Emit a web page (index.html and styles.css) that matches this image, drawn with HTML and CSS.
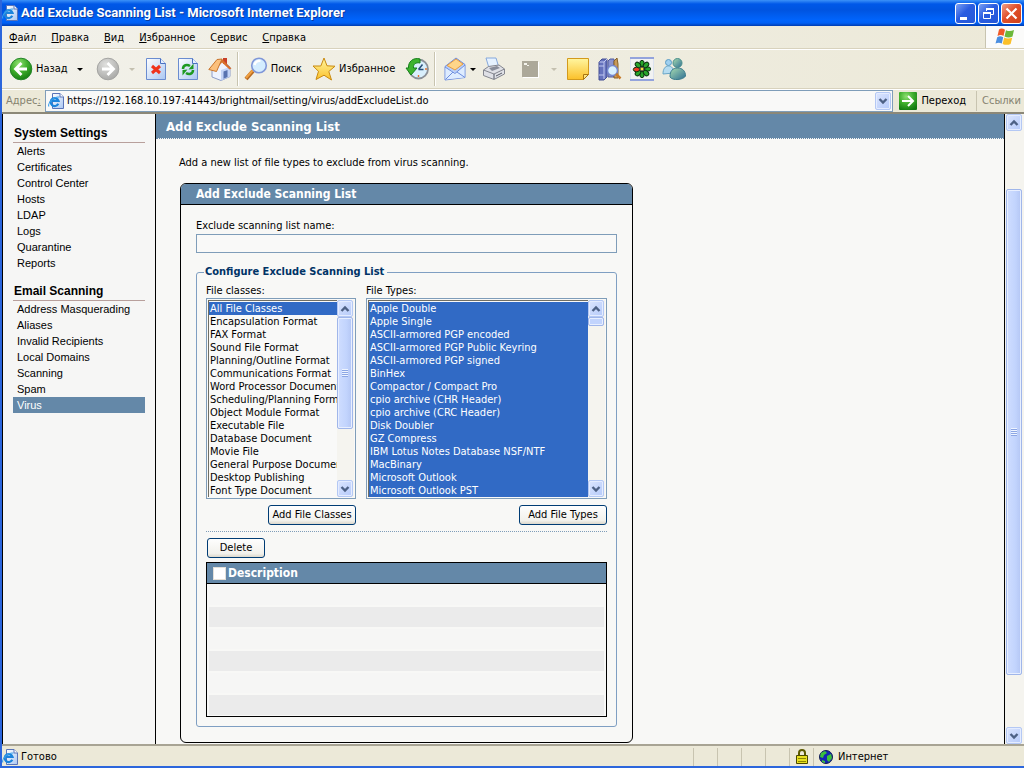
FILE: index.html
```html
<!DOCTYPE html>
<html lang="ru">
<head>
    <meta charset="UTF-8">
    <meta name="viewport" content="width=device-width, initial-scale=1.0">
    <title>Add Exclude Scanning List - Microsoft Internet Explorer</title>
    <link rel="stylesheet" href="styles.css">
</head>
<body>
    <!-- shared icons -->
    <svg class="defs" width="0" height="0" aria-hidden="true">
        <defs>
            <linearGradient id="gPage" x1="0" y1="0" x2="1" y2="1">
                <stop offset="0" stop-color="#fff"/><stop offset="1" stop-color="#a9c6f2"/>
            </linearGradient>
            <radialGradient id="gGreen" cx=".4" cy=".25" r=".8">
                <stop offset="0" stop-color="#8fe070"/><stop offset=".5" stop-color="#3fae2c"/><stop offset="1" stop-color="#127a10"/>
            </radialGradient>
            <radialGradient id="gGray" cx=".4" cy=".3" r=".8">
                <stop offset="0" stop-color="#e0e0de"/><stop offset="1" stop-color="#a3a3a1"/>
            </radialGradient>
            <linearGradient id="gGold" x1="0" y1="0" x2="0" y2="1">
                <stop offset="0" stop-color="#fff6a0"/><stop offset="1" stop-color="#fbc02a"/>
            </linearGradient>
            <linearGradient id="gPeople" x1="0" y1="0" x2="1" y2="1">
                <stop offset="0" stop-color="#a8dcb0"/><stop offset="1" stop-color="#2f6f94"/>
            </linearGradient>
            <symbol id="ie" viewBox="0 0 16 16">
                <path d="M4.500.500h7.500l3.500 3.500v11.500h-11z" fill="url(#gPage)" stroke="#5a74b8"/>
                <path d="M12 .5v3.500h3.500" fill="#fff" stroke="#5a74b8"/>
                <path d="M10.300 10.800a4 4 0 1 1 .2-3H4" fill="none" stroke="#1c84dc" stroke-width="2.200"/>
                <path d="M1 13.500C-1 10 6 3 11.500 4.200" fill="none" stroke="#3ba0ea" stroke-width="1.100"/>
            </symbol>
            <symbol id="up" viewBox="0 0 10 10"><path d="M1.500 7L5 3.500 8.500 7" fill="none" stroke="#4d6185" stroke-width="2.400"/></symbol>
            <symbol id="down" viewBox="0 0 10 10"><path d="M1.500 3L5 6.500 8.500 3" fill="none" stroke="#4d6185" stroke-width="2.400"/></symbol>
        </defs>
    </svg>

    <div class="window">
        <header class="titlebar">
            <svg class="icon16"><use href="#ie"/></svg>
            <h1>Add Exclude Scanning List - Microsoft Internet Explorer</h1>
            <button class="win-btn" aria-label="Свернуть"><svg viewBox="0 0 19 19"><path d="M4 13h7v3H4z" fill="#fff"/></svg></button>
            <button class="win-btn" aria-label="Восстановить"><svg viewBox="0 0 19 19" fill="none" stroke="#fff"><path d="M7.500 7V4.500h7v6H12"/><path d="M7 5h8" stroke-width="2"/><path d="M4.500 8.500h7v6h-7z"/><path d="M4 9h8" stroke-width="2"/></svg></button>
            <button class="win-btn close" aria-label="Закрыть"><svg viewBox="0 0 19 19"><path d="M4.500 4.500l10 10M14.500 4.500l-10 10" stroke="#fff" stroke-width="2.200"/></svg></button>
        </header>

        <div class="menubar">
            <nav class="menu">
                <a href="#"><u>Ф</u>айл</a>
                <a href="#"><u>П</u>равка</a>
                <a href="#"><u>В</u>ид</a>
                <a href="#"><u>И</u>збранное</a>
                <a href="#">С<u>е</u>рвис</a>
                <a href="#"><u>С</u>правка</a>
            </nav>
            <div class="flag">
                <svg width="20" height="18" viewBox="0 0 20 18">
                    <path d="M4 1.500c2-1.500 4-1 6 .3L8.500 8C6.500 6.800 5 6.800 2.500 8z" fill="#f05a28"/>
                    <path d="M11 2.200c2.500 1.200 5 1.200 8-.2L17.500 8.500c-2.500 1.200-5.500 1.200-8-.1z" fill="#6cb83a"/>
                    <path d="M2.200 9.200c2.200-1.200 4-1 6 0L6.800 15.600c-2-1-4-1.100-6.300 0z" fill="#4a8ee0"/>
                    <path d="M9.200 9.600c2.500 1.200 5 1.200 8 .1l-1.600 6.200c-2.500 1.300-5.500 1.200-8 0z" fill="#fbc02a"/>
                </svg>
            </div>
        </div>

        <div class="toolbar">
            <button class="tool">
                <svg viewBox="0 0 24 24"><circle cx="12" cy="12" r="10.800" fill="url(#gGreen)" stroke="#25862a"/><path d="M12.500 6L6.500 12l6 6M7 12h11" fill="none" stroke="#fff" stroke-width="2.800"/></svg>
                <span>Назад</span>
            </button>
            <button class="caret back-caret" aria-label="Список"></button>
            <button class="tool" aria-label="Вперед"><svg viewBox="0 0 24 24"><circle cx="12" cy="12" r="10.800" fill="url(#gGray)" stroke="#a4a4a2"/><path d="M11.500 6l6 6-6 6M17 12H6" fill="none" stroke="#fff" stroke-width="2.800"/></svg></button>
            <button class="caret off" aria-label="Список" disabled></button>
            <button class="tool" aria-label="Остановить"><svg viewBox="0 0 24 24"><path d="M2.500 1.500h14l5 5v16h-19z" fill="url(#gPage)" stroke="#6a8cd0"/><path d="M16.500 1.500v5h5" fill="#e4eeff" stroke="#4a70c0"/><path d="M8 9l8 7M16 9l-8 7" stroke="#f0331c" stroke-width="3"/></svg></button>
            <button class="tool" aria-label="Обновить"><svg viewBox="0 0 24 24"><path d="M2.500 1.500h14l5 5v16h-19z" fill="url(#gPage)" stroke="#6a8cd0"/><path d="M16.500 1.500v5h5" fill="#e4eeff" stroke="#4a70c0"/><path d="M7 12c0-4 4-5 7-3" fill="none" stroke="#1e9a22" stroke-width="2.500"/><path d="M12.500 12.500l5-.5V6.500z" fill="#1e9a22"/><path d="M17 13c0 4-4 5-7 3" fill="none" stroke="#1e9a22" stroke-width="2.500"/><path d="M11.500 12.500l-5 .5v5.500z" fill="#1e9a22"/></svg></button>
            <button class="tool" aria-label="Домой"><svg viewBox="0 0 24 24"><path d="M4 12v8l9 3.500 9-4V10L14 3z" fill="#eef3ff" stroke="#8c9cc8"/><path d="M13 13l9-3v9.500l-9 4z" fill="#c3d3f6"/><path d="M15.500 14.500l4-1.500v7l-4 1.800z" fill="#5872b0"/><path d="M15 1h4v6h-4z" fill="#c84028"/><path d="M14 2l9.500 9.500-2 1L14 5.500 11 9z" fill="#d9702c"/><path d="M.8 12.500L9 2.500 14 2l-5.500 12.500z" fill="#fbc07c" stroke="#c8742c" stroke-linejoin="round"/></svg></button>
            <i class="sep"></i>
            <button class="tool">
                <svg viewBox="0 0 24 24"><path d="M2 22l7-8" stroke="#b86a22" stroke-width="4"/><path d="M2 21l7-8" stroke="#f0a040" stroke-width="2"/><circle cx="15" cy="8.500" r="7.300" fill="#d4edff" stroke="#8097d8" stroke-width="1.600"/><path d="M10.500 8c.5-3 3-4.500 6-4" fill="none" stroke="#fff" stroke-width="2.400"/></svg>
                <span>Поиск</span>
            </button>
            <button class="tool favorites">
                <svg viewBox="0 0 24 24"><path d="M12 1l3 7.800 8 .4-6.200 5.300L19.500 23 12 18.200 4 22.500l2.500-8.200L1 9h7.800z" fill="url(#gGold)" stroke="#c98a10" stroke-linejoin="round"/></svg>
                <span>Избранное</span>
            </button>
            <button class="tool" aria-label="Журнал"><svg viewBox="0 0 24 24"><circle cx="13.500" cy="12" r="9.500" fill="#d9effc" stroke="#8b9097" stroke-width="1.800"/><path d="M13.500 12.500l4-5M13.500 12.500h5" stroke="#2a5078" stroke-width="1.500"/><path d="M13.500 4v2M13.500 18v2M20 12h2" stroke="#e07030" stroke-width="1.400"/><path d="M15 2C8 0 3 5 3.500 11H1L6 18l6-7H8.500C8 7.500 10.500 5 15 6z" fill="#3db32d" stroke="#16801c"/></svg></button>
            <i class="sep"></i>
            <button class="tool mail" aria-label="Почта"><svg viewBox="0 0 24 24"><path d="M2 9.500L13 1l9 6.500v13L2 23z" fill="#b8cffa" stroke="#6e8ede"/><path d="M4 8.500L13 2l7 5-8 6z" fill="#ffd68a" stroke="#e89c40"/><path d="M2.500 10l10 6 9-8v12.500L2.500 22.500z" fill="#deecff"/><path d="M2 10l10 6.500L22 8M2.500 22.500L10 15M22 20.500L14 15" fill="none" stroke="#6e8ede"/></svg></button>
            <button class="caret mail-caret" aria-label="Список"></button>
            <button class="tool" aria-label="Печать"><svg viewBox="0 0 24 24"><path d="M4 1h10l3 10H7z" fill="#e6f2ff" stroke="#85a8dc"/><path d="M1.500 13l5-3.500L17 8l5.500 4v5L12 22.500 1.500 18.500z" fill="#dfe0e6" stroke="#84868f"/><path d="M1.500 13L12 17l10.500-5" fill="none" stroke="#84868f"/><path d="M7 11l8-2 3 2-8 3z" fill="#888d9a"/><path d="M12 17v5M14 19l6-3" stroke="#565a66"/></svg></button>
            <button class="tool edit" aria-label="Правка" disabled><svg viewBox="0 0 24 24"><path d="M5 5h16v16H5z" fill="#fff"/><path d="M4 4h16v16H4z" fill="#aca899"/><path d="M6 6h3v2H6zM9 8h2v1H9z" fill="#f4f3ec"/></svg></button>
            <button class="caret off" aria-label="Список" disabled></button>
            <button class="tool" aria-label="Заметка"><svg viewBox="0 0 24 24"><path d="M1.500 1.500h21v16l-5 5h-16z" fill="url(#gGold)" stroke="#d39a1c"/><path d="M22.500 17.500l-5 5v-5z" fill="#ffe680" stroke="#a87510"/></svg></button>
            <button class="tool" aria-label="Справочные материалы"><svg viewBox="0 0 24 24"><path d="M1 5l3-3h5v18l-3 3H1z" fill="#6572bd" stroke="#444f94"/><path d="M6 5v17M1.500 5H6l3-3M1 9h5M1 18h5" stroke="#c1c8f0" fill="none"/><path d="M10 4l2-2h4v18h-6z" fill="#8b93ce" stroke="#515ca0"/><path d="M16 4l3-3 1 6v14h-4z" fill="#c89a58" stroke="#866028"/><circle cx="14.500" cy="13.500" r="5" fill="#d8f0ff" stroke="#7487cf" stroke-width="1.500"/><path d="M18 17l4.500 4.500" stroke="#c67b2a" stroke-width="2.500"/></svg></button>
            <button class="tool" aria-label="ICQ"><svg viewBox="0 0 24 24"><path d="M0 0h24v24H0z" fill="#dce2ee"/><path d="M0 0h24v2H0zM0 22h24v2H0z" fill="#93a3dc"/><path d="M1 2h22v20H1z" fill="#f1f2f2"/><g fill="#28a62c" stroke="#0c3410" stroke-width="1"><ellipse cx="12" cy="6.500" rx="2.200" ry="3.200"/><ellipse cx="12" cy="17.500" rx="2.200" ry="3.200"/><ellipse cx="17.500" cy="12" rx="3.200" ry="2.200"/><ellipse cx="16" cy="8" rx="3.200" ry="2.200" transform="rotate(-45 16 8)"/><ellipse cx="8" cy="8" rx="3.200" ry="2.200" transform="rotate(45 8 8)"/><ellipse cx="16" cy="16" rx="3.200" ry="2.200" transform="rotate(45 16 16)"/><ellipse cx="8" cy="16" rx="3.200" ry="2.200" transform="rotate(-45 8 16)"/><ellipse cx="6.500" cy="12.500" rx="3.200" ry="2.200" fill="#f03a24"/></g><circle cx="12" cy="12" r="2" fill="#f4e03c" stroke="#333"/></svg></button>
            <button class="tool" aria-label="Messenger"><svg viewBox="0 0 24 24"><circle cx="6.500" cy="5.500" r="3" fill="#9fd0f0" stroke="#5b9cc4"/><path d="M1 17c0-5 2-8 5.500-8 3 0 5 2 5 7z" fill="#b6dcf0" stroke="#6aa7c8"/><circle cx="15.500" cy="6" r="4.500" fill="url(#gPeople)" stroke="#4a8f8c"/><path d="M8 20c0-6 2.500-9 7.500-9s8 3 8 8c-2 4-13 5-15.500 1z" fill="url(#gPeople)" stroke="#3c7c8c"/></svg></button>
        </div>

        <div class="address-bar">
            <label for="url">Адрес<u>:</u></label>
            <div class="address-box">
                <svg class="icon16"><use href="#ie"/></svg>
                <input id="url" type="text" value="https://192.168.10.197:41443/brightmail/setting/virus/addExcludeList.do">
                <button class="scroll-btn" aria-label="Открыть список"><svg><use href="#down"/></svg></button>
            </div>
            <button class="go">
                <svg width="18" height="18" viewBox="0 0 18 18"><rect width="18" height="18" rx="1" fill="url(#gGreen)"/><path d="M9 4l5 5-5 5M13 9H3" fill="none" stroke="#fff" stroke-width="2"/></svg>
                Переход
            </button>
            <a class="links" href="#">Ссылки</a>
        </div>

        <div class="viewport">
            <aside class="sidebar">
                <h2>System Settings</h2>
                <ul>
                    <li><a href="#">Alerts</a></li>
                    <li><a href="#">Certificates</a></li>
                    <li><a href="#">Control Center</a></li>
                    <li><a href="#">Hosts</a></li>
                    <li><a href="#">LDAP</a></li>
                    <li><a href="#">Logs</a></li>
                    <li><a href="#">Quarantine</a></li>
                    <li><a href="#">Reports</a></li>
                </ul>
                <h2>Email Scanning</h2>
                <ul>
                    <li><a href="#">Address Masquerading</a></li>
                    <li><a href="#">Aliases</a></li>
                    <li><a href="#">Invalid Recipients</a></li>
                    <li><a href="#">Local Domains</a></li>
                    <li><a href="#">Scanning</a></li>
                    <li><a href="#">Spam</a></li>
                    <li><a class="active" href="#">Virus</a></li>
                </ul>
            </aside>

            <main class="content">
                <h2 class="page-title">Add Exclude Scanning List</h2>
                <p class="intro">Add a new list of file types to exclude from virus scanning.</p>

                <form class="panel">
                    <h3 class="panel-title">Add Exclude Scanning List</h3>
                    <div class="panel-body">
                        <label for="listName">Exclude scanning list name:</label>
                        <input id="listName" class="name-input" type="text">

                        <fieldset>
                            <legend>Configure Exclude Scanning List</legend>
                            <div class="lists">
                                <div class="list-col classes">
                                    <label for="classes">File classes:</label>
                                    <div class="listbox">
                                        <select id="classes" multiple size="15">
                                            <option selected>All File Classes</option>
                                            <option>Encapsulation Format</option>
                                            <option>FAX Format</option>
                                            <option>Sound File Format</option>
                                            <option>Planning/Outline Format</option>
                                            <option>Communications Format</option>
                                            <option>Word Processor Document</option>
                                            <option>Scheduling/Planning Format</option>
                                            <option>Object Module Format</option>
                                            <option>Executable File</option>
                                            <option>Database Document</option>
                                            <option>Movie File</option>
                                            <option>General Purpose Document</option>
                                            <option>Desktop Publishing</option>
                                            <option>Font Type Document</option>
                                        </select>
                                        <div class="scrollbar">
                                            <span class="scroll-btn"><svg><use href="#up"/></svg></span>
                                            <span class="thumb long"></span>
                                            <span class="scroll-btn"><svg><use href="#down"/></svg></span>
                                        </div>
                                    </div>
                                    <button type="button" class="btn">Add File Classes</button>
                                </div>
                                <div class="list-col types">
                                    <label for="types">File Types:</label>
                                    <div class="listbox">
                                        <select id="types" multiple size="15">
                                            <option selected>Apple Double</option>
                                            <option selected>Apple Single</option>
                                            <option selected>ASCII-armored PGP encoded</option>
                                            <option selected>ASCII-armored PGP Public Keyring</option>
                                            <option selected>ASCII-armored PGP signed</option>
                                            <option selected>BinHex</option>
                                            <option selected>Compactor / Compact Pro</option>
                                            <option selected>cpio archive (CHR Header)</option>
                                            <option selected>cpio archive (CRC Header)</option>
                                            <option selected>Disk Doubler</option>
                                            <option selected>GZ Compress</option>
                                            <option selected>IBM Lotus Notes Database NSF/NTF</option>
                                            <option selected>MacBinary</option>
                                            <option selected>Microsoft Outlook</option>
                                            <option selected>Microsoft Outlook PST</option>
                                        </select>
                                        <div class="scrollbar">
                                            <span class="scroll-btn"><svg><use href="#up"/></svg></span>
                                            <span class="thumb short"></span>
                                            <span class="scroll-btn"><svg><use href="#down"/></svg></span>
                                        </div>
                                    </div>
                                    <button type="button" class="btn">Add File Types</button>
                                </div>
                            </div>

                            <div class="delete-row">
                                <button type="button" class="btn delete">Delete</button>
                            </div>

                            <table>
                                <thead>
                                    <tr><th><label><input type="checkbox">Description</label></th></tr>
                                </thead>
                                <tbody>
                                    <tr><td></td></tr>
                                    <tr><td></td></tr>
                                    <tr><td></td></tr>
                                    <tr><td></td></tr>
                                    <tr><td></td></tr>
                                    <tr><td></td></tr>
                                </tbody>
                            </table>
                        </fieldset>
                    </div>
                </form>
            </main>

            <div class="scrollbar page-scroll">
                <span class="scroll-btn"><svg><use href="#up"/></svg></span>
                <span class="space-above"></span>
                <span class="thumb"></span>
                <span class="space-below"></span>
                <span class="scroll-btn"><svg><use href="#down"/></svg></span>
            </div>
        </div>

        <footer class="statusbar">
            <svg class="icon16"><use href="#ie"/></svg>
            <span class="status-text">Готово</span>
            <span class="pane"></span>
            <span class="pane"></span>
            <span class="pane"></span>
            <span class="pane"></span>
            <span class="pane">
                <svg width="14" height="16" viewBox="0 0 14 16"><path d="M4 7V4a3 3 0 0 1 6 0v3" fill="none" stroke="#5c5a00" stroke-width="2"/><path d="M1.500 6.500h11v8h-11z" fill="#e8e020" stroke="#4a4800"/><path d="M3 9.500h8M3 12.500h8" stroke="#8c8800"/></svg>
            </span>
            <span class="pane zone">
                <svg width="14" height="14" viewBox="0 0 14 14"><circle cx="7" cy="7" r="6.500" fill="#1424b4" stroke="#101c50"/><path d="M2 3l4-2 2 2-3 2-1 3-3-1zM8 6l4-2 1 4-3 4-2-2zM3 10l3 1v2l-3-1z" fill="#3cc03c"/></svg>
                Интернет
            </span>
        </footer>
    </div>
</body>
</html>
```

FILE: styles.css
```css
* {
    margin: 0;
    padding: 0;
    box-sizing: border-box;
}

body {
    font-family: 'DejaVu Sans Condensed', 'Noto Sans', sans-serif;
    font-size: 11px;
    line-height: 16px;
    color: #000;
}

button, input, select {
    font: inherit;
    color: inherit;
}

button {
    border: none;
    background: none;
}

a {
    color: inherit;
    text-decoration: none;
}

.defs {
    position: absolute;
}

.icon16 {
    width: 16px;
    height: 16px;
    flex: none;
}

/* window frame */
.window {
    display: flex;
    flex-direction: column;
    min-height: 100vh;
    border: solid #2c66dc;
    border-width: 0 0 2px 2px;
    background: #ece9d8;
}

.titlebar {
    display: flex;
    align-items: center;
    gap: 2px;
    height: 26px;
    padding-right: 2px;
    background: linear-gradient(#3c92f8 0, #0058e8 4px, #0054e0 10px, #0064fc 20px, #0060f4 23px, #003cb0 26px);
}

.titlebar h1 {
    flex: 1;
    padding-left: 1px;
    font-family: Roboto, 'Noto Sans', sans-serif;
    font-size: 13px;
    font-weight: 700;
    color: #fff;
    text-shadow: 1px 1px #0a3a9c;
}

.win-btn {
    width: 21px;
    height: 21px;
    border: 1px solid #fff;
    border-radius: 3px;
    background: linear-gradient(135deg, #7ba0f4, #2a5ce0 45%, #2458d8);
}

.win-btn svg {
    display: block;
    width: 19px;
    height: 19px;
}

.win-btn.close {
    background: linear-gradient(135deg, #f0a088, #e0502c 45%, #d04018);
}

.menubar {
    display: flex;
    height: 23px;
    border-bottom: 1px solid #d8d2bd;
    background: linear-gradient(90deg, #f2f1ea, #ece9d8);
}

.menu {
    display: flex;
    flex: 1;
    align-items: center;
    gap: 15px;
    padding: 2px 0 0 7px;
}

.flag {
    display: flex;
    align-items: center;
    justify-content: center;
    width: 39px;
    border-left: 1px solid #c8c4b0;
    background: #fbfbfa;
}

/* toolbar */
.toolbar {
    display: flex;
    align-items: center;
    height: 40px;
    padding-left: 3px;
    border-top: 1px solid #fff;
    border-bottom: 1px solid #d8d2bd;
    background: linear-gradient(90deg, #f2f1ea, #ece9d8);
}

.tool {
    display: flex;
    align-items: center;
    gap: 3px;
    height: 32px;
    padding: 0 4px;
}

.tool svg {
    width: 24px;
    height: 24px;
    flex: none;
}

.tool.edit {
    margin-left: 4px;
}

.tool.favorites {
    margin: 0 2px;
}

.tool.mail {
    margin-left: 2px;
    padding-right: 0;
}

.caret {
    display: flex;
    align-items: center;
    justify-content: center;
    width: 16px;
    height: 32px;
}

.caret::before {
    content: '';
    border: 3px solid transparent;
    border-top-color: #000;
    border-bottom: none;
}

.caret.off::before {
    border-top-color: #c4c0b0;
}

.back-caret {
    margin-right: 4px;
}

.mail-caret {
    width: 11px;
}

.sep {
    width: 2px;
    height: 34px;
    margin: 0 1px;
    border-left: 1px solid #c8c4b0;
    border-right: 1px solid #fff;
}

/* address bar */
.address-bar {
    display: flex;
    align-items: center;
    height: 25px;
    padding-left: 4px;
    border-top: 1px solid #fff;
    border-bottom: 2px solid #8c8878;
}

.address-bar label {
    width: 39px;
    color: #85826f;
}

.address-box {
    display: flex;
    flex: 1;
    align-items: center;
    gap: 3px;
    height: 22px;
    padding: 1px 1px 1px 2px;
    border: 1px solid #7f9db9;
    background: #f9f9f8;
}

.address-box input {
    flex: 1;
    min-width: 0;
    border: none;
    outline: none;
    background: none;
}

.address-box .scroll-btn {
    height: 18px;
}

.go {
    display: flex;
    align-items: center;
    gap: 4px;
    padding: 0 10px 0 6px;
}

.links {
    padding: 2px 3px 2px 5px;
    border-left: 1px solid #c8c4b0;
    color: #85826f;
}

/* scrollbars */
.scrollbar {
    display: flex;
    flex: none;
    flex-direction: column;
    width: 17px;
    background: #f5f4ef;
}

.scroll-btn {
    display: flex;
    flex: none;
    align-items: center;
    justify-content: center;
    width: 16px;
    height: 17px;
    border: 1px solid #b4c8f4;
    border-radius: 2px;
    background: linear-gradient(135deg, #dbe5fe, #b5cafa);
    box-shadow: inset 0 0 0 1px #e4ecff;
}

.scroll-btn svg {
    width: 10px;
    height: 10px;
}

.thumb {
    width: 16px;
    border: 1px solid #a0b6ea;
    border-radius: 2px;
    /* grip lines over the blue fill */
    background:
        repeating-linear-gradient(#eef4ff 0 1px, #8ca6e4 1px 2px) center / 6px 8px no-repeat,
        linear-gradient(90deg, #cfddff, #c2d4fd 60%, #b4c6f4);
    box-shadow: inset 0 0 0 1px #e8efff;
}

.scrollbar .scroll-btn:last-child {
    margin-top: auto;
}

/* page */
.viewport {
    display: flex;
    flex: 1;
    background: #f8f8f6;
}

.sidebar {
    flex: none;
    width: 154px;
    padding: 11px 10px 0;
    border: 1px solid #000;
    border-width: 0 1px;
    background: #f6f6f5;
    font-family: 'Liberation Sans', Arial, sans-serif;
}

.sidebar h2 {
    padding: 0 1px;
    border-bottom: 1px solid #b8a09c;
    font-size: 12px;
    line-height: 17px;
}

.sidebar ul {
    margin-bottom: 12px;
    list-style: none;
}

.sidebar a {
    display: block;
    padding: 0 4px;
    line-height: 16px;
}

.sidebar .active {
    background: #6488a8;
    color: #fff;
}

.content {
    flex: 1;
    min-width: 0;
    border-right: 1px solid #000;
}

.page-title {
    height: 25px;
    padding-left: 10px;
    border-bottom: 1px dotted #6488a8;
    background: #6488a8;
    background-clip: padding-box;
    color: #fff;
    font-size: 13px;
    line-height: 26px;
}

.intro {
    padding: 16px 23px 12px;
}

.page-scroll {
    padding-left: 1px;
    width: 19px;
}

.page-scroll .space-above {
    flex: 58;
}

.page-scroll .thumb {
    flex: 485;
}

.page-scroll .space-below {
    flex: 52;
}

/* form panel */
.panel {
    width: 453px;
    margin-left: 24px;
    border: 1px solid #000;
    border-radius: 6px;
    overflow: hidden;
}

.panel-title {
    padding-left: 15px;
    border-bottom: 1px solid #000;
    background: #6488a8;
    color: #fff;
    font-size: 12px;
    line-height: 20px;
}

.panel-body {
    padding: 13px 15px 15px;
}

label {
    display: block;
}

.name-input {
    display: block;
    width: 100%;
    height: 19px;
    padding: 0 3px;
    border: 1px solid #7f9db9;
    background: #f9f9f8;
}

fieldset {
    margin-top: 11px;
    padding: 0 9px 9px;
    border: 1px solid #7f9fc2;
    border-radius: 3px;
}

legend {
    padding: 0 3px 0 1px;
    margin-left: -2px;
    color: #003366;
    font-weight: 700;
}

.lists {
    display: flex;
    gap: 10px;
    padding: 3px 0 6px;
    border-bottom: 1px dotted #7f9db9;
}

.list-col {
    display: flex;
    flex-direction: column;
    align-items: flex-end;
}

.list-col label {
    align-self: flex-start;
    line-height: 15px;
}

.classes {
    flex: none;
    width: 150px;
}

.types {
    flex: 1;
}

.listbox {
    display: flex;
    width: 100%;
    height: 201px;
    padding: 1px;
    border: 1px solid #7f9db9;
    background: #f9f9f8;
}

.listbox select {
    flex: 1;
    min-width: 0;
    height: 197px;
    padding-top: 1px;
    border: solid #716f64;
    border-width: 1px 0 0 1px;
    border-radius: 0;
    outline: none;
    overflow: hidden;
    background: none;
}

.listbox option {
    height: 13px;
    min-height: 13px;
    padding: 0 1px;
    line-height: 13px;
    overflow: hidden;
}

.listbox option:checked {
    background-image: linear-gradient(#316ac5, #316ac5);
    -webkit-text-fill-color: #fff;
}

.thumb.long {
    height: 112px;
}

.thumb.short {
    height: 9px;
    background: #c2d4fd;
}

.btn {
    width: 88px;
    height: 20px;
    margin-top: 6px;
    border: 1px solid #003c74;
    border-radius: 3px;
    background: linear-gradient(#fefefe, #f2f1ec 80%, #dcd8cc);
    line-height: 16px;
    white-space: nowrap;
}

.btn.delete {
    width: 58px;
}

.delete-row {
    padding: 0 1px 4px;
}

table {
    width: 100%;
    border: 1px solid #000;
    border-spacing: 0;
}

th {
    height: 21px;
    padding-left: 6px;
    border-bottom: 1px solid #000;
    background: #6488a8;
    color: #fff;
    font-size: 12px;
    text-align: left;
}

th label {
    display: flex;
    align-items: center;
    gap: 2px;
}

th input {
    appearance: none;
    width: 13px;
    height: 13px;
    border: 1px solid #e4e0d8;
    background: #fff;
}

td {
    height: 22px;
    border: solid #f8f8f6;
    border-width: 1px 2px;
    background: #f6f6f5;
}

tbody tr:nth-child(even) td {
    background: #ebebeb;
}

/* status bar */
.statusbar {
    display: flex;
    align-items: center;
    height: 22px;
    padding-top: 2px;
    border-top: 2px solid #a8a494;
}

.status-text {
    flex: 1;
    padding-left: 3px;
}

.pane {
    display: flex;
    align-items: center;
    justify-content: center;
    gap: 5px;
    width: 24px;
    height: 18px;
    border-left: 1px solid #c8c4b0;
}

.pane.zone {
    justify-content: flex-start;
    width: 211px;
    padding-left: 5px;
}
```
